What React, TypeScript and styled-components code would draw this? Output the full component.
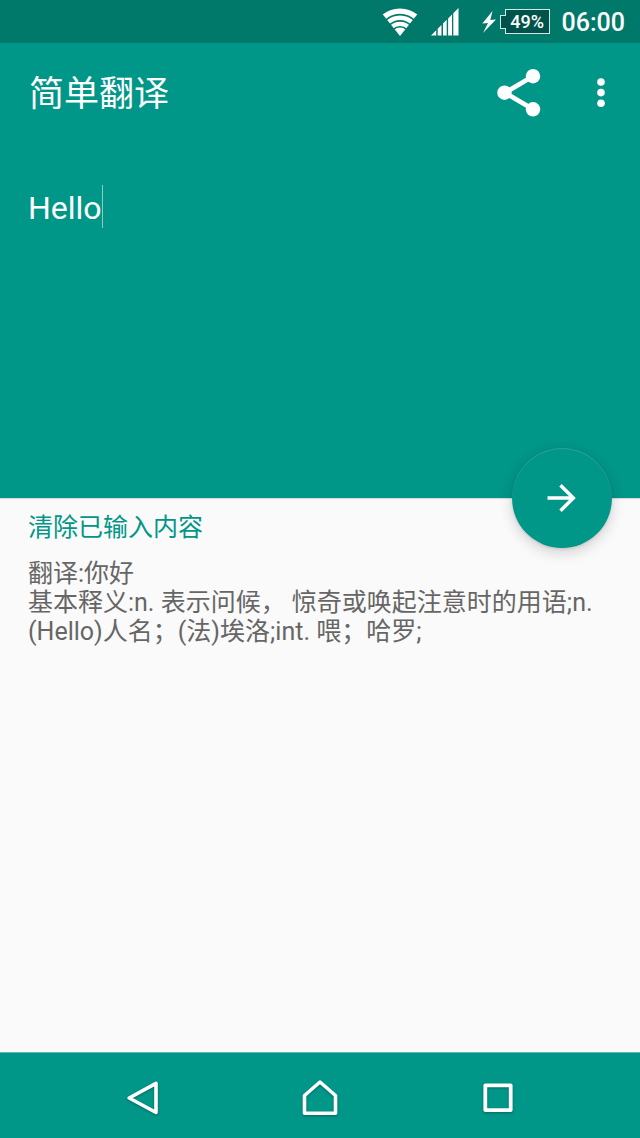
import React, { useState } from "react";
import styled, { createGlobalStyle } from "styled-components";

const teal = "#009688";
const tealDark = "#00796b";

const GlobalStyle = createGlobalStyle`
  * { box-sizing: border-box; }
  body {
    margin: 0;
    background: #fafafa;
    font-family: Roboto, "Noto Sans CJK SC", sans-serif;
  }
  button, textarea { font: inherit; color: inherit; }
`;

const Screen = styled.div`
  display: flex;
  flex-direction: column;
  min-height: 100vh;
`;

const StatusBar = styled.div`
  display: flex;
  align-items: center;
  justify-content: flex-end;
  height: 43px;
  padding-right: 15px;
  background: ${tealDark};
  color: #fff;
`;

const StatusIcon = styled.svg<{ $gap: number }>`
  display: block;
  flex: none;
  margin-right: ${(p) => p.$gap}px;
`;

const Battery = styled.div`
  display: flex;
  align-items: center;
  margin-right: 12px;
`;

const BatteryTip = styled.span`
  z-index: 1;
  width: 6px;
  height: 14px;
  margin-right: -1px;
  border: 1px solid #d5e8e5;
  border-right: 0;
  background: #00534a;
`;

const BatteryBody = styled.span`
  display: flex;
  align-items: center;
  justify-content: center;
  width: 45px;
  height: 25px;
  border: 1px solid #d5e8e5;
  background: #00534a;
  font-size: 18px;
  font-weight: 500;
  line-height: 22px;
`;

const Clock = styled.time`
  padding-top: 2px;
  font-size: 25px;
  font-weight: 500;
  line-height: 30px;
`;

const InputPanel = styled.main`
  position: relative;
  display: flex;
  flex-direction: column;
  min-height: 455px;
  background: ${teal};
  color: #fff;
  box-shadow: 0 1px 1px rgba(0, 0, 0, 0.12);
`;

const AppBar = styled.header`
  display: flex;
  align-items: center;
  height: 100px;
  padding-left: 29px;
`;

const Title = styled.h1`
  flex: 1;
  margin: 0;
  padding-top: 4px;
  font-size: 35px;
  font-weight: 400;
  line-height: 48px;
`;

const IconButton = styled.button<{ $width: number }>`
  display: flex;
  align-items: center;
  justify-content: center;
  width: ${(p) => p.$width}px;
  height: 80px;
  padding: 0;
  border: 0;
  background: none;
  cursor: pointer;
`;

const Editor = styled.div`
  display: flex;
  align-items: flex-start;
  flex: 1;
  padding: 42px 28px;
`;

const SourceText = styled.textarea`
  field-sizing: content;
  display: block;
  max-width: 100%;
  padding: 0;
  border: 0;
  outline: 0;
  resize: none;
  overflow: hidden;
  background: none;
  font-size: 32px;
  line-height: 47px;
  caret-color: transparent;
`;

const Caret = styled.span`
  width: 1px;
  height: 43px;
  background: #8accc5;
`;

const TranslateButton = styled.button`
  position: absolute;
  right: 28px;
  bottom: -50px;
  display: flex;
  align-items: center;
  justify-content: center;
  width: 100px;
  height: 100px;
  padding: 0;
  border: 0;
  border-radius: 50%;
  background: ${teal};
  box-shadow: 0 5px 14px rgba(0, 0, 0, 0.16), 0 1px 3px rgba(0, 0, 0, 0.12),
    inset 0 1px 1px rgba(255, 255, 255, 0.16);
  cursor: pointer;
`;

const Results = styled.section`
  flex: 1;
  padding: 15px 28px;
  font-size: 25px;
  line-height: 29px;
  color: #666;
`;

const ClearButton = styled.button`
  display: block;
  margin: 0 0 17px;
  padding: 0;
  border: 0;
  background: none;
  line-height: 29px;
  color: ${teal};
  cursor: pointer;
`;

const ResultLine = styled.p`
  margin: 0;
`;

const NavBar = styled.nav`
  display: flex;
  height: 86px;
  padding: 6px 53px 0;
  background: ${teal};
  color: #fff;
  box-shadow: inset 0 1px 0 #66b5ac;
`;

const NavButton = styled.button`
  display: flex;
  flex: 1;
  align-items: center;
  justify-content: center;
  padding: 0;
  border: 0;
  background: none;
  cursor: pointer;

  svg { filter: drop-shadow(0 1px 1px rgba(0, 0, 0, 0.3)); }
`;

const WifiIcon = () => (
  <StatusIcon $gap={13} width="36" height="28" viewBox="0 0 36 28" aria-label="Wi-Fi">
    <defs>
      <clipPath id="fan">
        <path d="M18 28 0 5.500V0h36v5.500Z" />
      </clipPath>
    </defs>
    <g clipPath="url(#fan)" fill="none" stroke="#fff">
      <circle cx="18" cy="28" r="24.900" strokeWidth="5.400" />
      <circle cx="18" cy="28" r="18.300" strokeWidth="4.600" />
      <circle cx="18" cy="28" r="12.200" strokeWidth="4.200" />
      <circle cx="18" cy="28" r="4.200" strokeWidth="8.400" />
    </g>
  </StatusIcon>
);

const SignalIcon = () => (
  <StatusIcon $gap={23} width="28" height="28" viewBox="0 0 28 28" fill="#fff" aria-label="Signal">
    <path d="M0 27.500 5.200 22.300V27.500ZM6.700 20.800 10.500 17V27.500H6.700ZM12 15.500 15.700 11.800V27.500H12ZM17.100 10.400 21 6.500V27.500H17.100ZM22.300 5.200 27.500 0V27.500H22.300Z" />
  </StatusIcon>
);

const BoltIcon = () => (
  <StatusIcon $gap={4} width="14" height="22" viewBox="0 0 14 22" fill="#fff" aria-label="Charging">
    <path d="M10.500 0 .3 12.500 6 12 1 22 14 8.500 8.300 9Z" />
  </StatusIcon>
);

const ShareIcon = () => (
  <svg width="44" height="48" viewBox="0 0 44 48" fill="#fff">
    <path d="M36 7.200 8 23.700 36 40.300" fill="none" stroke="#fff" strokeWidth="4.800" />
    <circle cx="36" cy="7.200" r="7.200" />
    <circle cx="7.500" cy="23.700" r="7.200" />
    <circle cx="36" cy="40.300" r="7.200" />
  </svg>
);

const MoreIcon = () => (
  <svg width="8" height="30" viewBox="0 0 8 30" fill="#fff">
    <circle cx="4" cy="4" r="3.800" />
    <circle cx="4" cy="14.600" r="3.800" />
    <circle cx="4" cy="25.200" r="3.800" />
  </svg>
);

const ArrowIcon = () => (
  <svg width="30" height="30" viewBox="0 0 30 30" fill="none" stroke="#fff" strokeWidth="3.500">
    <path d="M.5 15H26.500M13.500 2.200 26.300 15 13.500 27.800" />
  </svg>
);

const BackIcon = () => (
  <svg width="34" height="36" viewBox="0 0 34 36" fill="none" stroke="#fff" strokeWidth="3.600" strokeLinejoin="round">
    <path d="M31 3.300V32.500L4.200 18Z" />
  </svg>
);

const HomeIcon = () => (
  <svg width="36" height="36" viewBox="0 0 36 36" fill="none" stroke="#fff" strokeWidth="3.600" strokeLinejoin="round">
    <path d="M2.500 33.200V15.500L18 2L33.500 15.500V33.200Z" />
  </svg>
);

const RecentsIcon = () => (
  <svg width="30" height="30" viewBox="0 0 30 30" fill="none" stroke="#fff" strokeWidth="3.800" strokeLinejoin="round">
    <rect x="2.300" y="2.300" width="25.400" height="24.800" />
  </svg>
);

export default function App() {
  const [text, setText] = useState("Hello");
  return (
    <Screen>
      <GlobalStyle />
      <StatusBar>
        <WifiIcon />
        <SignalIcon />
        <BoltIcon />
        <Battery>
          <BatteryTip />
          <BatteryBody>49%</BatteryBody>
        </Battery>
        <Clock>06:00</Clock>
      </StatusBar>
      <InputPanel>
        <AppBar>
          <Title>简单翻译</Title>
          <IconButton $width={84} aria-label="分享">
            <ShareIcon />
          </IconButton>
          <IconButton $width={79} aria-label="更多">
            <MoreIcon />
          </IconButton>
        </AppBar>
        <Editor>
          <SourceText
            aria-label="输入内容"
            rows={1}
            spellCheck={false}
            value={text}
            onChange={(e) => setText(e.target.value)}
          />
          <Caret />
        </Editor>
        <TranslateButton aria-label="翻译">
          <ArrowIcon />
        </TranslateButton>
      </InputPanel>
      <Results>
        <ClearButton onClick={() => setText("")}>清除已输入内容</ClearButton>
        <ResultLine>翻译:你好</ResultLine>
        <ResultLine>
          基本释义:n. 表示问候， 惊奇或唤起注意时的用语;n. (Hello)人名；(法)埃洛;int. 喂；哈罗;
        </ResultLine>
      </Results>
      <NavBar>
        <NavButton aria-label="返回">
          <BackIcon />
        </NavButton>
        <NavButton aria-label="主页">
          <HomeIcon />
        </NavButton>
        <NavButton aria-label="最近任务">
          <RecentsIcon />
        </NavButton>
      </NavBar>
    </Screen>
  );
}
